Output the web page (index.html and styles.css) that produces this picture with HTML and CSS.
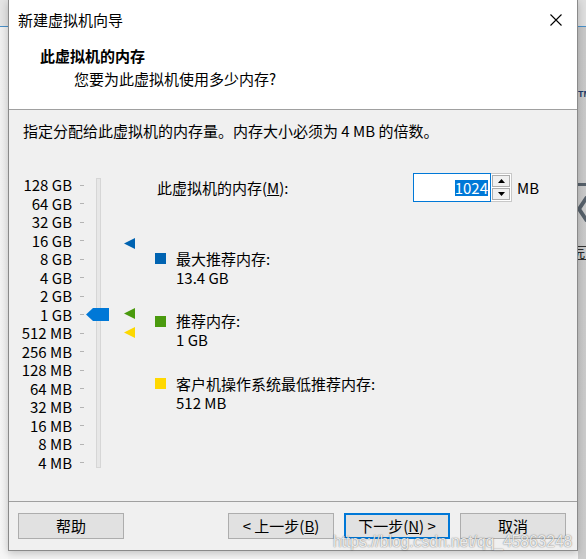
FILE: index.html
```html
<!DOCTYPE html>
<html lang="zh-CN">
<head>
<meta charset="utf-8">
<title>新建虚拟机向导</title>
<link rel="stylesheet" href="styles.css">
</head>
<body>
<div class="desktop">
  <div class="bg-left"><div class="bg-line"></div></div>
  <div class="bg-right">
    <div class="bg-line"></div>
    <div class="bg-tm">TM</div>
    <div class="bg-bar"></div>
    <svg class="bg-arrow" width="8" height="28" viewBox="0 0 8 28"><path d="M9 2 L1 14 L9 26" fill="none" stroke="#56606a" stroke-width="4"/></svg>
    <div class="bg-box">元</div>
  </div>

  <div class="dialog">
    <div class="titlebar">
      <span class="title">新建虚拟机向导</span>
      <svg class="close" width="12" height="12" viewBox="0 0 12 12"><path d="M0.5 0.5 L11.5 11.5 M11.5 0.5 L0.5 11.5" stroke="#000" stroke-width="1.1"/></svg>
    </div>
    <div class="header">
      <div class="h-title">此虚拟机的内存</div>
      <div class="h-sub">您要为此虚拟机使用多少内存?</div>
    </div>
    <div class="body">
      <div class="intro">指定分配给此虚拟机的内存量。内存大小必须为 4 MB 的倍数。</div>
      <div class="main">
        <div class="slider">
          <div class="labels">
            <div class="row"><span class="lbl">128 GB</span><span class="tick"></span></div>
            <div class="row"><span class="lbl">64 GB</span><span class="tick"></span></div>
            <div class="row"><span class="lbl">32 GB</span><span class="tick"></span></div>
            <div class="row"><span class="lbl">16 GB</span><span class="tick"></span></div>
            <div class="row"><span class="lbl">8 GB</span><span class="tick"></span></div>
            <div class="row"><span class="lbl">4 GB</span><span class="tick"></span></div>
            <div class="row"><span class="lbl">2 GB</span><span class="tick"></span></div>
            <div class="row"><span class="lbl">1 GB</span><span class="tick"></span></div>
            <div class="row"><span class="lbl">512 MB</span><span class="tick"></span></div>
            <div class="row"><span class="lbl">256 MB</span><span class="tick"></span></div>
            <div class="row"><span class="lbl">128 MB</span><span class="tick"></span></div>
            <div class="row"><span class="lbl">64 MB</span><span class="tick"></span></div>
            <div class="row"><span class="lbl">32 MB</span><span class="tick"></span></div>
            <div class="row"><span class="lbl">16 MB</span><span class="tick"></span></div>
            <div class="row"><span class="lbl">8 MB</span><span class="tick"></span></div>
            <div class="row"><span class="lbl">4 MB</span><span class="tick"></span></div>
          </div>
          <div class="track"></div>
          <svg class="thumb" style="top:138px" width="23" height="13" viewBox="0 0 23 13"><polygon points="0,6.5 7,0 23,0 23,13 7,13" fill="#0078d7"/></svg>
          <svg class="marker" style="top:68px" width="11" height="11" viewBox="0 0 11 11"><polygon points="0,5.5 11,0 11,11" fill="#0063b1"/></svg>
          <svg class="marker" style="top:138px" width="11" height="11" viewBox="0 0 11 11"><polygon points="0,5.5 11,0 11,11" fill="#4a9a0e"/></svg>
          <svg class="marker" style="top:157px" width="11" height="11" viewBox="0 0 11 11"><polygon points="0,5.5 11,0 11,11" fill="#fcd800"/></svg>
        </div>
        <div class="right">
          <div class="mem-row">
            <span class="mem-label">此虚拟机的内存(<u>M</u>):</span>
            <div class="spinbox">
              <div class="input"><span class="sel">1024</span></div>
              <div class="spin">
                <div class="spin-btn"><svg width="7" height="4" viewBox="0 0 7 4"><polygon points="0,4 3.5,0 7,4" fill="#000"/></svg></div>
                <div class="spin-btn"><svg width="7" height="4" viewBox="0 0 7 4"><polygon points="0,0 3.5,4 7,0" fill="#000"/></svg></div>
              </div>
            </div>
            <span class="unit">MB</span>
          </div>
          <div class="legend">
            <div class="item">
              <span class="sq sq-blue"></span>
              <div class="item-text"><div>最大推荐内存:</div><div>13.4 GB</div></div>
            </div>
            <div class="item">
              <span class="sq sq-green"></span>
              <div class="item-text"><div>推荐内存:</div><div>1 GB</div></div>
            </div>
            <div class="item">
              <span class="sq sq-yellow"></span>
              <div class="item-text"><div>客户机操作系统最低推荐内存:</div><div>512 MB</div></div>
            </div>
          </div>
        </div>
      </div>
    </div>
    <div class="footer">
      <button class="btn">帮助</button>
      <span class="spacer"></span>
      <button class="btn">&lt; 上一步(<u>B</u>)</button>
      <button class="btn btn-default">下一步(<u>N</u>) &gt;</button>
      <button class="btn">取消</button>
    </div>
  </div>
  <div class="watermark">https://blog.csdn.net/qq_45863248</div>
</div>
</body>
</html>
```

FILE: styles.css
```css
* { box-sizing: border-box; }
html, body { margin: 0; padding: 0; }
body {
  width: 586px;
  height: 559px;
  overflow: hidden;
  background: #f4f4f4;
  font-family: "Microsoft YaHei UI", "Noto Sans CJK SC", sans-serif;
  font-size: 15px;
  color: #000;
}
.desktop { position: relative; width: 586px; height: 559px; }

.bg-left {
  position: absolute; left: 0; top: 0; width: 8px; height: 559px;
  background: linear-gradient(#e4e4e4 0, #e4e4e4 26px, #f0f0f0 27px, #f6f6f6 100%);
}
.bg-right {
  position: absolute; left: 578px; top: 0; width: 8px; height: 559px;
  background: linear-gradient(#dedede 0, #dedede 26px, #c8c8c8 27px, #cccccc 100%);
  overflow: hidden;
}
.bg-line { position: absolute; left: 0; top: 26px; width: 8px; height: 1px; background: #4a90c8; }
.bg-tm {
  position: absolute; left: 0; top: 88px;
  font-family: "Liberation Sans", sans-serif; font-weight: bold; font-size: 9px;
  color: #1c3a6a; line-height: 12px;
}
.bg-bar { position: absolute; left: 0; top: 183px; width: 8px; height: 3px; background: #56606a; }
.bg-arrow { position: absolute; left: 0; top: 195px; }
.bg-box {
  position: absolute; left: -6px; top: 246px; width: 20px; height: 14px;
  border: 1px solid #333; font-size: 11px; line-height: 12px; padding-left: 1px;
}

.dialog {
  position: absolute; left: 8px; top: 0;
  width: 570px; height: 551px;
  border: 1px solid #8a8a8a; border-top: none;
  background: #f0f0f0;
  display: flex; flex-direction: column;
  box-shadow: 0 2px 8px rgba(0,0,0,0.22);
}
.titlebar {
  height: 40px; background: #fff;
  display: flex; align-items: center;
  padding-left: 9px; padding-right: 15px;
}
.title { flex: 1; line-height: 20px; }
.close { display: block; }

.header {
  height: 70px; background: #fff;
  border-bottom: 1px solid #a0a0a0;
  padding-top: 6px;
}
.h-title { padding-left: 31px; font-weight: bold; line-height: 20px; }
.h-sub { padding-left: 65px; line-height: 20px; margin-top: 3px; }

.body { flex: 1; padding-top: 11px; }
.intro { padding-left: 14px; line-height: 20px; }

.main { display: flex; margin-top: 29px; }
.slider { position: relative; width: 131px; height: 305px; }
.labels { padding-top: 5.75px; }
.row { display: flex; align-items: center; height: 18.53px; }
.lbl { width: 63px; text-align: right; line-height: 18px; white-space: nowrap; }
.tick { width: 4px; height: 1px; background: #b4b4b4; margin-left: 8px; }
.track {
  position: absolute; left: 87px; top: 8px; width: 5px; height: 290px;
  background: #e7e7e7; border: 1px solid #d6d6d6;
}
.thumb { position: absolute; left: 77px; display: block; }
.marker { position: absolute; left: 115px; display: block; }

.right { padding-left: 15px; }
.mem-row { display: flex; align-items: center; height: 29px; margin-top: 3px; }
.mem-label { width: 258px; padding-left: 2px; line-height: 20px; }
.spinbox { display: flex; height: 29px; }
.input {
  width: 78px; height: 29px;
  border: 1px solid #0078d7; background: #fff;
  display: flex; align-items: center; justify-content: flex-end;
  padding-right: 2px;
}
.sel { background: #0078d7; color: #fff; line-height: 16px; }
.spin {
  width: 21px; height: 29px;
  display: flex; flex-direction: column; gap: 1px;
  border: 1px solid #c8c8c8; border-left: none; background: #fff;
  padding: 1px;
}
.spin-btn {
  flex: 1; background: #f0f0f0; border: 1px solid #adadad;
  display: flex; align-items: center; justify-content: center;
}
.spin-btn svg { display: block; }
.unit { margin-left: 5px; line-height: 20px; }

.legend { margin-top: 46.5px; display: flex; flex-direction: column; gap: 24.5px; }
.item { display: flex; align-items: flex-start; }
.sq { width: 11px; height: 11px; margin-top: 4.5px; flex: none; }
.sq-blue { background: #0063b1; }
.sq-green { background: #4a9a0e; }
.sq-yellow { background: #ffd800; }
.item-text { margin-left: 10px; line-height: 19px; }

.footer {
  height: 49px;
  border-top: 1px solid #a0a0a0;
  padding: 11px 11px 0 9px;
  display: flex; align-items: flex-start; gap: 10px;
}
.spacer { flex: 1; }
.btn {
  width: 106px; height: 26px;
  background: #e1e1e1; border: 1px solid #adadad;
  font-family: inherit; font-size: 15px; color: #000;
  padding: 0; line-height: 22px;
}
.btn-default { border: 2px solid #0078d7; }
.footer .spacer + .btn { margin-left: -10px; }

.watermark {
  position: absolute; left: 333px; top: 532px;
  font-family: "Liberation Sans", sans-serif; font-size: 15.6px;
  color: rgba(255,255,255,0.85);
  text-shadow: 0 0 1px rgba(0,0,0,0.45), 0 0 2px rgba(0,0,0,0.25);
  line-height: 20px; white-space: nowrap;
}
```
